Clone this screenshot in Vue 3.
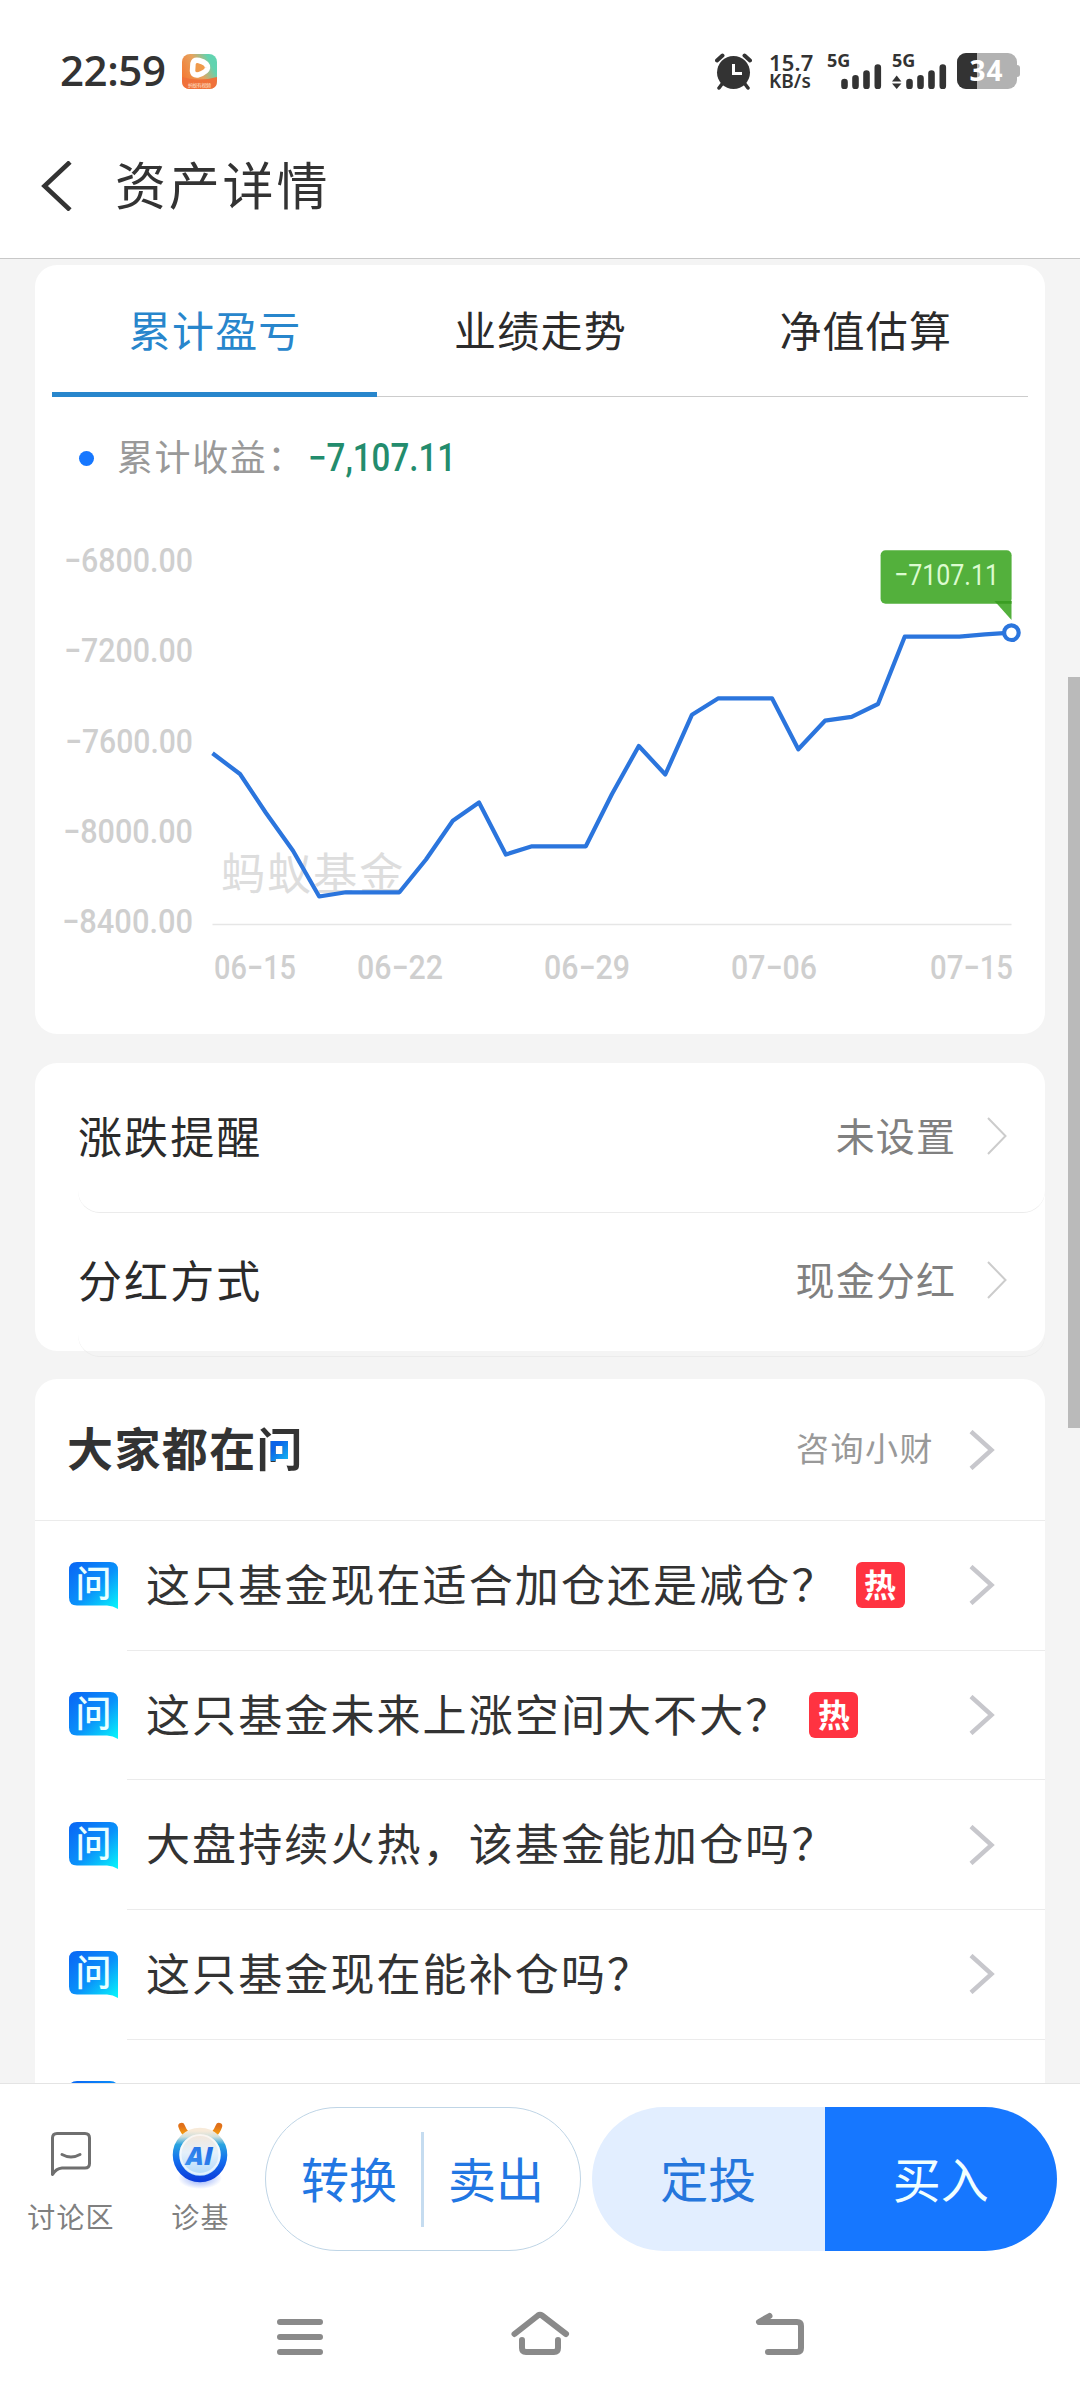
<!-- src/views/AssetDetail.vue -->
<script setup>
import { ref } from 'vue'

const tabs = ['累计盈亏', '业绩走势', '净值估算']
const activeTab = ref(0)

const yLabels = [
  { text: '−6800.00', x: 66, y: 572 },
  { text: '−7200.00', x: 66, y: 662 },
  { text: '−7600.00', x: 67, y: 753 },
  { text: '−8000.00', x: 65, y: 843 },
  { text: '−8400.00', x: 64, y: 933 },
]
const xLabels = [
  { text: '06−15', x: 214, w: 82 },
  { text: '06−22', x: 357, w: 86 },
  { text: '06−29', x: 544, w: 86 },
  { text: '07−06', x: 731, w: 86 },
  { text: '07−15', x: 930, w: 83 },
]
const points = [
  [212.5, 753.3], [240, 774], [266, 813], [293, 850.7], [319.2, 896.5], [346, 892.3],
  [372.6, 892.3], [399.4, 892.3], [426, 859.5], [452.8, 820.7], [479, 802.5], [505.8, 854.5],
  [532, 846.3], [559, 846.3], [585.8, 846.3], [612, 794], [638.8, 746], [665.3, 774.5],
  [692, 714.7], [718.4, 698.3], [745, 698.3], [772, 698.3], [798.3, 749.3], [825, 720.7],
  [851.6, 716.8], [878, 704], [904.7, 636.7], [932, 636.7], [959.4, 636.7], [985, 634.3],
  [1011.4, 632.7],
]
const line = points.map((p) => p.join(',')).join(' ')

const settings = [
  { label: '涨跌提醒', value: '未设置' },
  { label: '分红方式', value: '现金分红' },
]
const questions = [
  { text: '这只基金现在适合加仓还是减仓？', hot: true },
  { text: '这只基金未来上涨空间大不大？', hot: true },
  { text: '大盘持续火热，该基金能加仓吗？' },
  { text: '这只基金现在能补仓吗？' },
  { text: '这只基金' },
]
</script>

<template>
  <div class="page">
    <header class="top">
      <div class="status">
        <span class="time">22:59</span>
        <svg class="app-icon" width="35" height="35" viewBox="0 0 35 35">
          <defs>
            <linearGradient id="appBg" x1="0" y1="0.6" x2="1" y2="0.1">
              <stop offset="0" stop-color="#f47a35" />
              <stop offset="0.45" stop-color="#e6a45f" />
              <stop offset="0.8" stop-color="#62d3b0" />
            </linearGradient>
          </defs>
          <rect width="35" height="35" rx="8" fill="url(#appBg)" />
          <path d="M0 23 Q17 28 35 23 V27 Q35 35 27 35 H8 Q0 35 0 27 Z" fill="#f0713a" />
          <path d="M11 9.500 Q12 5.500 17 6.500 Q26 9 25.500 14 Q25 18 16 21 Q11 21.500 10.500 17 Z" fill="#ef9a4c" stroke="#fff" stroke-width="5.500" stroke-linejoin="round" />
          <text x="6" y="33" font-size="5" textLength="23">蚂蚁有视频</text>
        </svg>
        <div class="status-right">
          <svg width="37" height="37" viewBox="0 0 37 37">
            <circle cx="18.500" cy="19.500" r="16.500" fill="#333" />
            <path d="M2 7.500 L7.500 2.500 M35 7.500 L29.500 2.500" stroke="#333" stroke-width="4" stroke-linecap="round" />
            <path d="M7 31 L4 35 M30 31 L33 35" stroke="#333" stroke-width="3.500" stroke-linecap="round" />
            <path d="M18.500 11 V20.500 H27" fill="none" stroke="#fff" stroke-width="3" />
          </svg>
          <div class="speed">
            <span>15.7</span>
            <span class="unit">KB/s</span>
          </div>
          <div class="signal">
            <span>5G</span>
            <svg width="55" height="25" viewBox="0 11 55 25">
              <path d="M17.500 29 V33 M28.500 25.200 V33 M39.500 20.500 V33 M50.800 14.500 V33" />
            </svg>
          </div>
          <div class="signal">
            <span>5G</span>
            <svg width="55" height="25" viewBox="0 11 55 25">
              <polygon points="0,28.5 9.4,28.5 4.7,22.5" />
              <polygon points="0,30.5 9.4,30.5 4.7,36" />
              <path d="M17.500 29 V33 M28.500 25.200 V33 M39.500 20.500 V33 M50.800 14.500 V33" />
            </svg>
          </div>
          <svg width="63" height="36" viewBox="0 0 63 36">
            <clipPath id="charge"><rect width="20" height="36" /></clipPath>
            <rect x="54" y="12" width="9" height="12" rx="3" fill="#b2b2b2" />
            <rect width="60" height="36" rx="9" fill="#b2b2b2" />
            <rect width="60" height="36" rx="9" fill="#333" clip-path="url(#charge)" />
            <text class="battery" x="12.500" y="28" font-size="28" textLength="33">34</text>
          </svg>
        </div>
      </div>
      <div class="title-bar">
        <svg width="32" height="50" viewBox="0 0 32 50">
          <path d="M29 1 L3.500 25 L29 49" fill="none" stroke="#333" stroke-width="4.600" />
        </svg>
        <h1>资产详情</h1>
      </div>
    </header>

    <main class="content">
      <section class="card chart-card">
        <nav class="tabs">
          <button
            v-for="(tab, i) in tabs"
            :key="tab"
            type="button"
            :class="{ active: i === activeTab }"
            @click="activeTab = i"
          >{{ tab }}</button>
        </nav>
        <div class="legend">
          <i class="dot"></i>
          <span>累计收益：</span>
          <svg width="156" height="50" viewBox="0 0 156 50">
            <text x="0" y="37" font-size="38" textLength="148" lengthAdjust="spacingAndGlyphs">−7,107.11</text>
          </svg>
        </div>
        <svg class="chart" width="1010" height="514" viewBox="35 520 1010 514">
          <text
            v-for="l in yLabels"
            :key="l.text"
            class="axis"
            :x="l.x - 2"
            :y="l.y"
            :textLength="195 - l.x"
            lengthAdjust="spacingAndGlyphs"
          >{{ l.text }}</text>
          <text
            v-for="l in xLabels"
            :key="l.text"
            class="axis"
            :x="l.x"
            y="979"
            :textLength="l.w"
            lengthAdjust="spacingAndGlyphs"
          >{{ l.text }}</text>
          <text class="watermark" x="221" y="890">蚂蚁基金</text>
          <path d="M212.500 924.500 H1011.500" stroke="#e6e6e6" stroke-width="1.500" />
          <polyline :points="line" fill="none" stroke="#2b75dd" stroke-width="4.200" stroke-linejoin="round" />
          <circle cx="1011.400" cy="632.700" r="7.300" fill="#fff" stroke="#2b75dd" stroke-width="4.200" />
          <rect x="880.600" y="550.300" width="131" height="53.500" rx="5" fill="#53b03c" />
          <path d="M994.500 601 H1011.500 V620 Z" fill="#53b03c" />
          <path d="M994.500 601 H1011.500 V603.800 H997 Z" fill="#3a9e22" />
          <text class="tip" x="894" y="584.500" textLength="105" lengthAdjust="spacingAndGlyphs">−7107.11</text>
        </svg>
      </section>

      <section class="card settings">
        <div v-for="s in settings" :key="s.label" class="setting-row">
          <span class="label">{{ s.label }}</span>
          <span class="value">{{ s.value }}</span>
          <svg width="20" height="38" viewBox="0 0 20 38">
            <path d="M1 1 L18.500 19 L1 37" fill="none" stroke="#ccc" stroke-width="2" />
          </svg>
        </div>
      </section>

      <section class="card asks">
        <div class="asks-head">
          <h2>大家都在<span class="ask-word">问</span></h2>
          <span class="consult">咨询小财</span>
          <svg class="arrow" width="26" height="40" viewBox="0 0 26 40">
            <path d="M2 1.500 L22.500 20 L2 38.500" />
          </svg>
        </div>
        <div v-for="q in questions" :key="q.text" class="ask-row">
          <svg class="ask-icon" width="49" height="47" viewBox="0 0 49 47">
            <defs>
              <linearGradient id="askBg" x1="0.1" y1="0.1" x2="0.95" y2="1">
                <stop offset="0" stop-color="#0a6cf5" />
                <stop offset="0.5" stop-color="#0a92fa" />
                <stop offset="1" stop-color="#08f3fb" />
              </linearGradient>
            </defs>
            <path d="M8 0 H41 Q49 0 49 8 V47 Q44 44 38 43.600 H8 Q0 43.600 0 35.600 V8 Q0 0 8 0 Z" fill="url(#askBg)" />
            <text x="6.500" y="34.500">问</text>
          </svg>
          <div class="ask-body">
            <span>{{ q.text }}</span>
            <span v-if="q.hot" class="hot">热</span>
            <svg class="arrow" width="26" height="40" viewBox="0 0 26 40">
              <path d="M2 1.500 L22.500 20 L2 38.500" />
            </svg>
          </div>
        </div>
      </section>
      <i class="scrollbar"></i>
    </main>

    <footer class="actions">
      <div class="action-link discuss">
        <svg width="44" height="66" viewBox="0 0 44 66">
          <path d="M3.500 53.500 V17 Q3.500 12.500 8 12.500 H36 Q40.500 12.500 40.500 17 V42.500 Q40.500 47 36 47 H13 Q7 47.500 3.500 53.500 Z" fill="none" stroke="#6f6f6f" stroke-width="3" stroke-linejoin="round" />
          <path d="M13 33.500 Q22 38.500 31 33.500" fill="none" stroke="#6f6f6f" stroke-width="3" stroke-linecap="round" />
        </svg>
        <span>讨论区</span>
      </div>
      <div class="action-link">
        <svg width="60" height="70" viewBox="0 0 60 70">
          <defs>
            <linearGradient id="ring" x1="0" y1="0" x2="0" y2="1">
              <stop offset="0" stop-color="#f7ead9" />
              <stop offset="0.12" stop-color="#cfdfdc" />
              <stop offset="0.28" stop-color="#2aa4e0" />
              <stop offset="0.6" stop-color="#1470ee" />
              <stop offset="1" stop-color="#0c3fdc" />
            </linearGradient>
            <linearGradient id="face" x1="0" y1="0" x2="0" y2="1">
              <stop offset="0" stop-color="#f6e5d3" />
              <stop offset="0.45" stop-color="#e4f0fb" />
              <stop offset="1" stop-color="#a9d6fb" />
            </linearGradient>
            <linearGradient id="horn" x1="0" y1="0" x2="0" y2="1">
              <stop offset="0" stop-color="#e0701a" />
              <stop offset="1" stop-color="#f9a70d" />
            </linearGradient>
            <linearGradient id="aiText" x1="1" y1="0" x2="0" y2="1">
              <stop offset="0" stop-color="#1a5fe0" />
              <stop offset="1" stop-color="#3f9bf5" />
            </linearGradient>
            <radialGradient id="glow">
              <stop offset="0.4" stop-color="#b4c6fb" />
              <stop offset="1" stop-color="#b4c6fb" stop-opacity="0" />
            </radialGradient>
          </defs>
          <ellipse cx="30" cy="57" rx="22" ry="11" fill="url(#glow)" />
          <path d="M11.500 5 Q13 10 18 15 M49 5 Q47.500 10 42.500 15" fill="none" stroke="url(#horn)" stroke-width="6.500" stroke-linecap="round" />
          <circle cx="30" cy="34" r="24" fill="url(#face)" stroke="url(#ring)" stroke-width="6.500" />
          <circle cx="30" cy="33.500" r="19.500" fill="none" stroke="#fff" stroke-opacity="0.600" stroke-width="2" />
          <text class="ai" x="16" y="44" textLength="27" lengthAdjust="spacingAndGlyphs">AI</text>
        </svg>
        <span>诊基</span>
      </div>
      <div class="pill outline">
        <button type="button">转换</button>
        <i></i>
        <button type="button">卖出</button>
      </div>
      <div class="pill solid">
        <button type="button" class="plan">定投</button>
        <button type="button" class="buy">买入</button>
      </div>
    </footer>

    <div class="sysnav">
      <svg width="60" height="52" viewBox="270 2308 60 52">
        <path d="M280 2322 H320 M280 2337 H320 M280 2352 H320" />
      </svg>
      <svg width="60" height="52" viewBox="510 2308 60 52">
        <path d="M514.500 2334 L538 2315.500 Q540 2314 542 2315.500 L566 2334" />
        <path d="M522 2340 V2348 Q522 2352 526 2352 H554 Q558 2352 558 2348 V2340" />
      </svg>
      <svg width="60" height="52" viewBox="750 2308 60 52">
        <path d="M769.500 2316 L759 2322 H797 Q801 2322 801 2326 V2348 Q801 2352 797 2352 H768" />
      </svg>
    </div>
  </div>
</template>

<style>
html, body { margin: 0; background: #fff; }
</style>

<style scoped>
.page {
  width: 1080px; height: 2400px; overflow: hidden; display: flex; flex-direction: column;
  background: #fff; color: #333; font-family: "Noto Sans CJK SC", sans-serif;
}
.page svg { display: block; flex: none; }
button { border: 0; padding: 0; background: none; font: inherit; cursor: pointer; }
h1, h2 { margin: 0; font-weight: 400; }

.top { height: 258px; flex: none; border-bottom: 1px solid #c8c8c8; }
.status { height: 142px; padding: 0 60px; display: flex; align-items: center; }
.time { font-family: "Open Sans", sans-serif; font-weight: 600; font-size: 42px; letter-spacing: -.4px; line-height: 60px; margin-top: -2px; }
.app-icon { margin-left: 16px; }
.app-icon text { fill: #ffe3cc; }
.status-right {
  margin-left: auto; display: flex; align-items: center;
  font-family: "Noto Sans", sans-serif; font-weight: 700;
}
.speed { width: 43px; margin: 0 15px 0 17px; display: flex; flex-direction: column; font-weight: 600; font-size: 22px; line-height: 20px; letter-spacing: .2px; }
.speed .unit { font-size: 19px; letter-spacing: 0; line-height: 18px; }
.signal { margin-right: 10px; height: 36px; display: flex; flex-direction: column; justify-content: space-between; }
.signal span { height: 11px; font-size: 18px; line-height: 15px; }
.signal path { stroke: #333; stroke-width: 6.6; stroke-linecap: round; }
.signal polygon { fill: #333; }
.battery { fill: #fff; }
.title-bar { height: 88px; padding-left: 41px; display: flex; align-items: center; }
.title-bar h1 { margin: -6px 0 0 42px; font-size: 51px; line-height: 70px; letter-spacing: 2.8px; }

.content { position: relative; height: 1824px; flex: none; overflow: hidden; padding: 6px 35px 0; box-sizing: border-box; background: #f4f4f4; }
.card { background: #fff; border-radius: 22px; }
.chart-card { height: 769px; overflow: hidden; }
.tabs { display: flex; margin: 0 17px; height: 132px; box-shadow: inset 0 -1px #ccc; }
.tabs button {
  flex: 1; box-sizing: border-box; padding: 0 0 1px 1px; border-bottom: 5px solid transparent;
  font-size: 42px; letter-spacing: 1.2px; color: #2b2b2b;
}
.tabs .active { color: #2886cc; border-color: #2886cc; }
.legend { height: 123px; display: flex; align-items: center; padding-left: 44px; box-sizing: border-box; color: #999; font-size: 36px; letter-spacing: 1.6px; }
.legend span { margin: -7px 0 0 23px; width: 191px; white-space: nowrap; }
.legend text { font-family: Roboto, sans-serif; font-weight: 500; letter-spacing: 0; fill: #238c6d; }
.legend .dot { width: 15px; height: 15px; border-radius: 50%; background: #1677ff; }
.axis { font: 500 33.5px Roboto, sans-serif; fill: #cfcfcf; }
.watermark { font-size: 44px; letter-spacing: 2.1px; fill: #ddd; }
.tip { font: 400 30px Roboto, sans-serif; fill: #dcfbd0; }

.settings { height: 282px; margin-top: 29px; padding-top: 6px; }
.setting-row {
  height: 134px; margin-left: 43px; padding: 0 38px 9px 0;
  display: flex; align-items: center; border-bottom: 1px solid #ebebeb; border-radius: 0 0 22px 22px;
}
.label { flex: 1; font-size: 44px; letter-spacing: 2.1px; line-height: 60px; color: #2b2b2b; margin-top: -3px; }
.value { font-size: 39px; letter-spacing: 1.1px; line-height: 60px; color: #808080; margin: -4px 31px 0 0; }

.asks { margin-top: 28px; height: 900px; }
.asks-head { height: 142px; padding: 0 50px 0 32px; display: flex; align-items: center; border-bottom: 1px solid #ebebeb; box-sizing: border-box; }
.asks-head h2 { flex: 1; font-size: 46px; font-weight: 700; letter-spacing: 1.4px; line-height: 60px; margin-top: -7px; }
.ask-word {
  color: transparent; -webkit-background-clip: text; background-clip: text;
  background-image: linear-gradient(135deg, #0a63e8 30%, #16c8f4), linear-gradient(#333, #333);
  background-size: 24px 20px, 100% 100%; background-position: 11px 28px, 0 0; background-repeat: no-repeat;
}
.consult { font-size: 33px; letter-spacing: 1.5px; line-height: 50px; color: #999; margin: -6px 35px 0 0; }
.arrow path { fill: none; stroke: #c7c7cc; stroke-width: 4.4; }
.ask-row { height: 129.7px; padding-left: 34px; display: flex; align-items: center; }
.ask-icon text { font-size: 36px; font-weight: 500; fill: #eaffff; }
.ask-body {
  flex: 1; align-self: stretch; box-sizing: border-box; margin-left: 9px; padding: 0 50px 0 19px;
  display: flex; align-items: center; border-bottom: 1px solid #ebebeb; font-size: 44px; letter-spacing: 2.1px;
}
.ask-body > span:first-child { line-height: 60px; margin-top: -5px; white-space: nowrap; }
.ask-body .arrow { margin-left: auto; }
.hot {
  width: 49px; height: 46px; margin-left: 18px; border-radius: 6px; background: #ff3341; color: #fff;
  font-size: 32px; font-weight: 700; line-height: 43px; text-align: center; letter-spacing: 0;
}
/* sits over the page edge while the list scrolls */
.scrollbar { position: absolute; right: 0; top: 418px; width: 12px; height: 751px; background: #bababa; }

.actions { height: 200px; flex: none; box-sizing: border-box; border-top: 1px solid #e4e4e4; display: flex; padding: 23px 23px 0 0; }
.action-link { width: 118px; display: flex; flex-direction: column; align-items: center; padding-top: 14px; box-sizing: border-box; font-size: 28px; letter-spacing: 1.2px; color: #808080; }
.action-link svg { height: 70px; }
.action-link span { line-height: 40px; margin: 5px -1px 0 0; }
.discuss { width: 141px; }
.discuss svg { height: 66px; margin-bottom: 4px; }
.ai { font: italic 800 25px "Open Sans", sans-serif; letter-spacing: 0; fill: url(#aiText); }
.pill { height: 144px; border-radius: 72px; box-sizing: border-box; display: flex; align-items: center; font-size: 48px; letter-spacing: 1.6px; overflow: hidden; flex: none; }
.pill button { flex: 1; height: 100%; padding-bottom: 4px; }
.outline { width: 316px; margin-left: 6px; padding: 0 12px 0 11px; border: 1px solid #bfd5e6; }
.outline button { color: #2277e3; }
.outline i { width: 3px; height: 95px; background: #c5dcf0; }
.solid { width: 465px; margin-left: 11px; }
.plan { background: #e2eeff; color: #2576dc; }
.buy { background: #1677ff; color: #f0ffff; }

.sysnav { flex: 1; display: flex; justify-content: center; gap: 180px; padding-top: 25px; }
.sysnav path { fill: none; stroke: #8a8a8a; stroke-width: 6; stroke-linecap: round; stroke-linejoin: round; }
</style>
